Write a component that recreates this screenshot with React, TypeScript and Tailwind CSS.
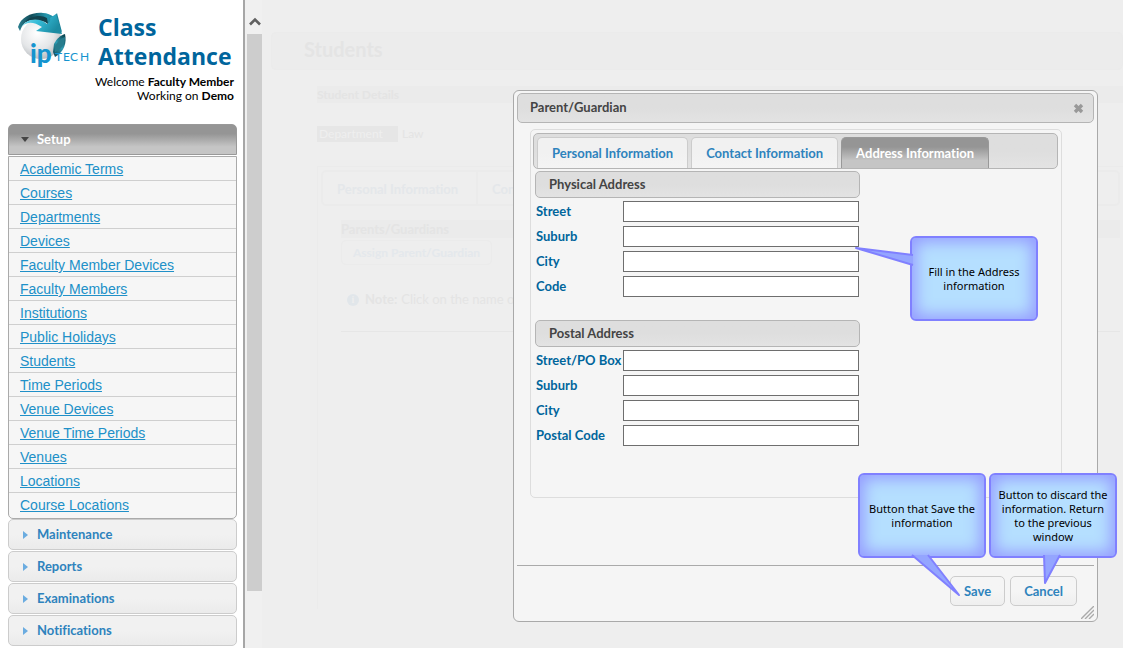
import React, { useState } from "react";

const setupLinks = [
  "Academic Terms",
  "Courses",
  "Departments",
  "Devices",
  "Faculty Member Devices",
  "Faculty Members",
  "Institutions",
  "Public Holidays",
  "Students",
  "Time Periods",
  "Venue Devices",
  "Venue Time Periods",
  "Venues",
  "Locations",
  "Course Locations",
];

const closedSections = ["Maintenance", "Reports", "Examinations", "Notifications"];

const tabs = ["Personal Information", "Contact Information", "Address Information"];

const Logo = () => (
  <svg className="absolute left-[16px] top-[8px]" width="76" height="68" viewBox="0 0 76 68" role="img" aria-label="ip Tech">
    <defs>
      <radialGradient id="globe" cx="0.4" cy="0.35" r="0.7">
        <stop offset="0" stopColor="#ffffff" />
        <stop offset="0.6" stopColor="#e4e6e8" />
        <stop offset="1" stopColor="#b4b8bc" />
      </radialGradient>
      <linearGradient id="swoosh" x1="0" y1="0" x2="1" y2="0">
        <stop offset="0" stopColor="#2b7f90" />
        <stop offset="0.3" stopColor="#124c58" />
        <stop offset="0.65" stopColor="#2496ad" />
        <stop offset="1" stopColor="#1b7f95" />
      </linearGradient>
      <linearGradient id="arrow" x1="0" y1="0" x2="1" y2="0.4">
        <stop offset="0" stopColor="#8fdcea" />
        <stop offset="0.5" stopColor="#35bcd8" />
        <stop offset="1" stopColor="#1c8ba2" />
      </linearGradient>
      <linearGradient id="side" x1="0.8" y1="0" x2="0.2" y2="1">
        <stop offset="0" stopColor="#0d4652" />
        <stop offset="0.5" stopColor="#2e9bb2" />
        <stop offset="1" stopColor="#12505d" />
      </linearGradient>
    </defs>
    <circle cx="25" cy="31" r="20" fill="url(#globe)" />
    {/* top arrow */}
    <path d="M2 19C5 9 16 4 27 5C31 5 35 7 38 9L41 5L46 24C39 20 33 15 27 13C18 10 8 11 4 23Z" fill="url(#swoosh)" />
    <path d="M4 21C9 13 17 13 26 19L20 23L46 26L40 6L34 10C35 13 33 15 31 16C23 9 11 9 4 21Z" fill="url(#arrow)" />
    <path d="M9 14C14 8 25 6 31 10L32 16C26 11 17 10 9 14Z" fill="#12424d" />
    {/* right side arrow */}
    <path d="M38 36C41 30 45 27 49 26C51 35 48 44 39 49L37 44Z" fill="url(#side)" />
    <path d="M39 38C42 33 45 30 49 29C49 36 46 41 39 44Z" fill="#277c8d" />
    <g fontFamily="Lato, sans-serif" fill="#1594cf">
      <text x="14" y="55" fontWeight="900" fontSize="26">
        ip
      </text>
      <text x="39" y="53" fontSize="12">
        T
      </text>
      <text x="47" y="53" fontSize="12">
        E
      </text>
      <text x="54" y="53" fontSize="12">
        C
      </text>
      <text x="64" y="53" fontSize="12">
        H
      </text>
    </g>
  </svg>
);

const Sidebar = () => (
  <aside className="w-[243px] shrink-0 bg-white">
    <div className="relative h-[124px] pl-[98px] pr-[9px] pt-[13px]">
      <Logo />
      <h1 className="font-['Open_Sans',sans-serif] text-[23px] font-bold leading-[29px] text-[#00659c]">
        Class
        <br />
        Attendance
      </h1>
      <p className="-ml-8 mt-1 whitespace-nowrap text-right text-[12px] leading-[14px] text-black">
        Welcome <b>Faculty Member</b>
        <br />
        Working on <b>Demo</b>
      </p>
    </div>
    <nav className="pl-2 pr-1.5">
      <button className="flex h-[31px] w-full items-center rounded-t-[5px] border border-[#999] bg-linear-to-b from-[#959595] from-30% to-[#c5c5c5] to-75% pl-3 text-white">
        <svg width="8" height="5" className="mr-2">
          <path d="M0 0H8L4 5Z" fill="#454545" />
        </svg>
        <span className="font-bold">Setup</span>
      </button>
      <ul className="mt-px rounded-b-[5px] border border-[#aaa] bg-[#f6f6f6] pb-px font-['Liberation_Sans',Arial,sans-serif] text-[14px]">
        {setupLinks.map((link) => (
          <li key={link} className="h-6 border-b border-[#cfcfcf] pl-[11px] leading-6 last:border-b-0">
            <a href="#" className="text-[#2090c8] underline">
              {link}
            </a>
          </li>
        ))}
      </ul>
      {closedSections.map((section) => (
        <button
          key={section}
          className="mb-px flex h-[31px] w-full items-center rounded-[5px] border border-[#ccc] bg-linear-to-b from-[#f1f1f1] from-50% to-[#ebebeb] pl-3.5 font-bold text-[#2e83bd]"
        >
          <svg width="5" height="8" className="mr-[9px]">
            <path d="M0 0V8L5 4Z" fill="#6bace0" />
          </svg>
          {section}
        </button>
      ))}
    </nav>
  </aside>
);

const ScrollBar = () => (
  <div className="flex w-[19px] shrink-0 flex-col border-l-2 border-[#a6a6a6] bg-[#f0f0f0] pl-0.5">
    <button aria-label="Scroll up" className="flex h-[34px] items-center justify-center pt-2">
      <svg width="12" height="9">
        <path d="M1 7.5L6 2.5L11 7.5" fill="none" stroke="#606060" strokeWidth="2.6" />
      </svg>
    </button>
    <div className="flex-1 bg-[#cdcdcd]" />
    <div className="h-[57px]" />
  </div>
);

// the student page, washed out behind the open dialog
const StudentsPage = () => (
  <main className="h-full overflow-hidden pl-[9px] pt-8 text-[#e4e4e4]">
    <h2 className="flex h-[38px] items-center rounded-[5px] border border-[#ebebeb] bg-[#ececec] pb-1 pl-8 text-[20px] font-bold">
      Students
    </h2>
    <div className="pl-[46px] pt-4">
      <h3 className="h-[17px] bg-[#ebebeb] text-[12px] font-bold leading-[17px]">Student Details</h3>
      <div className="mt-[23px] flex h-4 gap-1 text-[12px] leading-4">
        <span className="w-[81px] bg-[#e6e6e6] pl-0.5 text-[#efefef]">Department</span>
        <span>Law</span>
      </div>
      <div className="mt-6 border-l border-t border-[#ebebeb] p-[3px]">
        <div className="flex h-9 rounded-[5px] border-2 border-[#ebebeb] font-bold leading-[34px] text-[#e4e7ea]">
          <span className="w-[155px] border-r-2 border-[#ebebeb] pl-3.5">Personal Information</span>
          <span className="pl-3.5">Contact</span>
        </div>
        <div className="h-[400px] pl-5 pt-3.5">
          <h3 className="h-[18px] bg-[#ebebeb] font-bold leading-[18px]">Parents/Guardians</h3>
          <button className="mt-0.5 h-[25px] w-[151px] rounded-[5px] border border-[#ebebeb] text-[12px] font-bold text-[#e4e8ec]">
            Assign Parent/Guardian
          </button>
          <p className="mt-[22px] flex h-[26px] items-center whitespace-nowrap">
            <span className="mx-1.5 h-3 w-3 rounded-full bg-[#e1e6ea] text-center font-['Liberation_Serif',serif] text-[10px] font-bold leading-3 text-[#eee]">
              i
            </span>
            <b className="mr-1">Note:</b> Click on the name of the
          </p>
          <hr className="mt-[18px] border-[#e6e6e6]" />
        </div>
      </div>
    </div>
  </main>
);

interface AddressSectionProps {
  title: string;
  prefix: string;
  fields: string[];
}

const AddressSection = ({ title, prefix, fields }: AddressSectionProps) => (
  <section className="w-[325px]">
    <h3 className="mb-px h-[27px] rounded-[5px] border border-[#b5b5b5] bg-linear-to-b from-[#dedede] from-50% to-[#e3e3e3] pl-[13px] font-bold leading-[25px] text-[#444]">
      {title}
    </h3>
    {fields.map((field) => (
      <div key={field} className="flex h-[25px] items-center pl-px pr-px">
        <label htmlFor={prefix + field} className="w-[87px] shrink-0 whitespace-nowrap font-bold text-[#00659c]">
          {field}
        </label>
        <input
          id={prefix + field}
          type="text"
          className="h-[21px] min-w-0 flex-1 border border-[#6e6e6e] bg-white px-1"
        />
      </div>
    ))}
  </section>
);

interface CalloutProps {
  place: string;
  tailBox: string;
  tail: string;
  children: React.ReactNode;
}

const Callout = ({ place, tailBox, tail, children }: CalloutProps) => (
  <div
    className={
      "absolute flex h-[85px] w-[128px] items-center justify-center rounded-md border-2 border-[#8080ff] bg-[#b5dfff] text-center font-['Noto_Sans',sans-serif] text-[11px] leading-[14px] text-black shadow-[inset_0_0_15px_4px_#959cff] " +
      place
    }
  >
    <svg className={"absolute overflow-visible " + tailBox} width="60" height="40">
      <path d={tail} fill="#94a5ff" stroke="#8080ff" strokeWidth="2" strokeLinejoin="round" />
    </svg>
    <p className="relative">{children}</p>
  </div>
);

const ParentDialog = () => {
  const [activeTab, setActiveTab] = useState(tabs[2]);
  const button =
    "h-[30px] rounded-[5px] border border-[#ccc] bg-linear-to-b from-[#f5f5f5] from-50% to-[#efefef] px-[13px] pt-px font-bold text-[#2e83bd]";
  return (
    <div
      role="dialog"
      aria-label="Parent/Guardian"
      className="relative w-[585px] rounded-md border border-[#a9a9a9] bg-[#f5f5f5] px-[3px] pb-[15px] pt-0.5"
    >
      <div className="flex h-[30px] items-center rounded-[5px] border border-[#b5b5b5] bg-linear-to-b from-[#dedede] from-50% to-[#e3e3e3] pl-3 pr-[9px]">
        <h2 className="flex-1 font-bold text-[#444]">Parent/Guardian</h2>
        <button aria-label="Close">
          <svg width="11" height="11">
            <path d="M2 2L9 9M9 2L2 9" stroke="#999" strokeWidth="3.4" />
          </svg>
        </button>
      </div>
      <div className="ml-[13px] mr-8 mt-1.5 rounded-[5px] border border-[#ddd] px-0.5 pb-[49px] pt-[3px]">
        <div
          role="tablist"
          className="mr-px flex h-9 gap-[3px] rounded-[5px] border border-[#b5b5b5] bg-linear-to-b from-[#dedede] from-50% to-[#e3e3e3] pl-[3px] pt-[3px]"
        >
          {tabs.map((tab) => (
            <button
              key={tab}
              role="tab"
              aria-selected={tab === activeTab}
              onClick={() => setActiveTab(tab)}
              className={
                "whitespace-nowrap rounded-t-[5px] border border-b-0 px-3.5 pt-px font-bold " +
                (tab === activeTab
                  ? "border-[#999] bg-linear-to-b from-[#959595] from-30% to-[#c5c5c5] to-75% text-white"
                  : "border-[#ccc] bg-linear-to-b from-[#f1f1f1] from-50% to-[#f4f4f4] text-[#2e83bd]")
              }
            >
              {tab}
            </button>
          ))}
        </div>
        <form className="flex flex-col gap-[21px] pl-0.5 pt-0.5">
          <AddressSection title="Physical Address" prefix="physical-" fields={["Street", "Suburb", "City", "Code"]} />
          <AddressSection
            title="Postal Address"
            prefix="postal-"
            fields={["Street/PO Box", "Suburb", "City", "Postal Code"]}
          />
        </form>
      </div>
      <div className="mt-[67px] flex justify-end gap-[5px] border-t border-[#aaa] pr-[17px] pt-2.5">
        <button className={button}>Save</button>
        <button className={button}>Cancel</button>
      </div>
      <svg className="absolute bottom-0.5 right-[3px]" width="13" height="13">
        <path d="M0 13L13 0M4 13L13 4M8 13L13 8" stroke="#aaa" strokeWidth="1.4" />
      </svg>
      <Callout place="left-[396px] top-[145px]" tailBox="left-[-60px] top-0" tail="M61 17L4 10L61 27">
        Fill in the Address
        <br />
        information
      </Callout>
      <Callout place="left-[344px] top-[382px]" tailBox="left-[52px] top-[81px]" tail="M0 -1L47 39L16 -1">
        Button that Save the
        <br />
        information
      </Callout>
      <Callout place="left-[475px] top-[382px]" tailBox="left-[52px] top-[81px]" tail="M1 -1L2 27L17 -1">
        Button to discard the
        <br />
        information. Return
        <br />
        to the previous
        <br />
        window
      </Callout>
    </div>
  );
};

const App = () => {
  return (
    <div className="flex min-h-screen bg-[#eee] font-[Lato,sans-serif] text-[13px] [font-variant-ligatures:none]">
      <Sidebar />
      <ScrollBar />
      <div className="relative min-w-0 flex-1">
        <StudentsPage />
        <div className="absolute inset-0 flex items-start justify-end pr-[25px] pt-[90px]">
          <ParentDialog />
        </div>
      </div>
    </div>
  );
};

export default App;
